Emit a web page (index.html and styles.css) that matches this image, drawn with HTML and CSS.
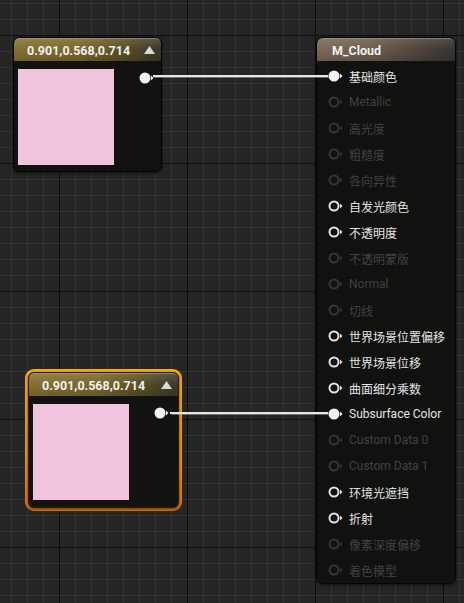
FILE: index.html
```html
<!DOCTYPE html>
<html>
<head>
<meta charset="utf-8">
<link rel="stylesheet" href="styles.css">
</head>
<body>
<div class="graph">

  <div class="node const-node node-a">
    <div class="node-head const-head">
      <span class="head-title">0.901,0.568,0.714</span>
      <svg class="collapse" width="11" height="8" viewBox="0 0 11 8"><polygon points="5.5,0 11,8 0,8" fill="#d8d8d8"/></svg>
    </div>
    <div class="const-body">
      <div class="swatch"></div>
      <svg class="pin" width="16" height="12" viewBox="0 0 16 12"><circle cx="6" cy="6" r="5.5" fill="#f2f2f2"/><polygon points="12,3.5 14.5,6 12,8.5" fill="#f2f2f2"/></svg>
    </div>
  </div>

  <div class="select-ring">
    <div class="node const-node">
      <div class="node-head const-head">
        <span class="head-title">0.901,0.568,0.714</span>
        <svg class="collapse" width="11" height="8" viewBox="0 0 11 8"><polygon points="5.5,0 11,8 0,8" fill="#d8d8d8"/></svg>
      </div>
      <div class="const-body">
        <div class="swatch"></div>
        <svg class="pin" width="16" height="12" viewBox="0 0 16 12"><circle cx="6" cy="6" r="5.5" fill="#f2f2f2"/><polygon points="12,3.5 14.5,6 12,8.5" fill="#f2f2f2"/></svg>
      </div>
    </div>
  </div>

  <div class="node mat-node">
    <div class="node-head mat-head"><span class="head-title">M_Cloud</span></div>
    <ul class="pins">
      <li class="row on"><svg class="pin" width="16" height="12" viewBox="0 0 16 12"><circle cx="6" cy="6" r="5.5" fill="#f2f2f2"/><polygon points="12,3.5 14.5,6 12,8.5" fill="#f2f2f2"/></svg><span>基础颜色</span></li>
      <li class="row off"><svg class="pin" width="16" height="12" viewBox="0 0 16 12"><circle cx="6" cy="6" r="4.5" fill="none" stroke="currentColor" stroke-width="2"/><polygon points="12,3.5 14.5,6 12,8.5" fill="currentColor"/></svg><span>Metallic</span></li>
      <li class="row off"><svg class="pin" width="16" height="12" viewBox="0 0 16 12"><circle cx="6" cy="6" r="4.5" fill="none" stroke="currentColor" stroke-width="2"/><polygon points="12,3.5 14.5,6 12,8.5" fill="currentColor"/></svg><span>高光度</span></li>
      <li class="row off"><svg class="pin" width="16" height="12" viewBox="0 0 16 12"><circle cx="6" cy="6" r="4.5" fill="none" stroke="currentColor" stroke-width="2"/><polygon points="12,3.5 14.5,6 12,8.5" fill="currentColor"/></svg><span>粗糙度</span></li>
      <li class="row off"><svg class="pin" width="16" height="12" viewBox="0 0 16 12"><circle cx="6" cy="6" r="4.5" fill="none" stroke="currentColor" stroke-width="2"/><polygon points="12,3.5 14.5,6 12,8.5" fill="currentColor"/></svg><span>各向异性</span></li>
      <li class="row on"><svg class="pin" width="16" height="12" viewBox="0 0 16 12"><circle cx="6" cy="6" r="4.5" fill="none" stroke="currentColor" stroke-width="2"/><polygon points="12,3.5 14.5,6 12,8.5" fill="currentColor"/></svg><span>自发光颜色</span></li>
      <li class="row on"><svg class="pin" width="16" height="12" viewBox="0 0 16 12"><circle cx="6" cy="6" r="4.5" fill="none" stroke="currentColor" stroke-width="2"/><polygon points="12,3.5 14.5,6 12,8.5" fill="currentColor"/></svg><span>不透明度</span></li>
      <li class="row off"><svg class="pin" width="16" height="12" viewBox="0 0 16 12"><circle cx="6" cy="6" r="4.5" fill="none" stroke="currentColor" stroke-width="2"/><polygon points="12,3.5 14.5,6 12,8.5" fill="currentColor"/></svg><span>不透明蒙版</span></li>
      <li class="row off"><svg class="pin" width="16" height="12" viewBox="0 0 16 12"><circle cx="6" cy="6" r="4.5" fill="none" stroke="currentColor" stroke-width="2"/><polygon points="12,3.5 14.5,6 12,8.5" fill="currentColor"/></svg><span>Normal</span></li>
      <li class="row off"><svg class="pin" width="16" height="12" viewBox="0 0 16 12"><circle cx="6" cy="6" r="4.5" fill="none" stroke="currentColor" stroke-width="2"/><polygon points="12,3.5 14.5,6 12,8.5" fill="currentColor"/></svg><span>切线</span></li>
      <li class="row on"><svg class="pin" width="16" height="12" viewBox="0 0 16 12"><circle cx="6" cy="6" r="4.5" fill="none" stroke="currentColor" stroke-width="2"/><polygon points="12,3.5 14.5,6 12,8.5" fill="currentColor"/></svg><span>世界场景位置偏移</span></li>
      <li class="row on"><svg class="pin" width="16" height="12" viewBox="0 0 16 12"><circle cx="6" cy="6" r="4.5" fill="none" stroke="currentColor" stroke-width="2"/><polygon points="12,3.5 14.5,6 12,8.5" fill="currentColor"/></svg><span>世界场景位移</span></li>
      <li class="row on"><svg class="pin" width="16" height="12" viewBox="0 0 16 12"><circle cx="6" cy="6" r="4.5" fill="none" stroke="currentColor" stroke-width="2"/><polygon points="12,3.5 14.5,6 12,8.5" fill="currentColor"/></svg><span>曲面细分乘数</span></li>
      <li class="row on"><svg class="pin" width="16" height="12" viewBox="0 0 16 12"><circle cx="6" cy="6" r="5.5" fill="#f2f2f2"/><polygon points="12,3.5 14.5,6 12,8.5" fill="#f2f2f2"/></svg><span>Subsurface Color</span></li>
      <li class="row off"><svg class="pin" width="16" height="12" viewBox="0 0 16 12"><circle cx="6" cy="6" r="4.5" fill="none" stroke="currentColor" stroke-width="2"/><polygon points="12,3.5 14.5,6 12,8.5" fill="currentColor"/></svg><span>Custom Data 0</span></li>
      <li class="row off"><svg class="pin" width="16" height="12" viewBox="0 0 16 12"><circle cx="6" cy="6" r="4.5" fill="none" stroke="currentColor" stroke-width="2"/><polygon points="12,3.5 14.5,6 12,8.5" fill="currentColor"/></svg><span>Custom Data 1</span></li>
      <li class="row on"><svg class="pin" width="16" height="12" viewBox="0 0 16 12"><circle cx="6" cy="6" r="4.5" fill="none" stroke="currentColor" stroke-width="2"/><polygon points="12,3.5 14.5,6 12,8.5" fill="currentColor"/></svg><span>环境光遮挡</span></li>
      <li class="row on"><svg class="pin" width="16" height="12" viewBox="0 0 16 12"><circle cx="6" cy="6" r="4.5" fill="none" stroke="currentColor" stroke-width="2"/><polygon points="12,3.5 14.5,6 12,8.5" fill="currentColor"/></svg><span>折射</span></li>
      <li class="row off"><svg class="pin" width="16" height="12" viewBox="0 0 16 12"><circle cx="6" cy="6" r="4.5" fill="none" stroke="currentColor" stroke-width="2"/><polygon points="12,3.5 14.5,6 12,8.5" fill="currentColor"/></svg><span>像素深度偏移</span></li>
      <li class="row off"><svg class="pin" width="16" height="12" viewBox="0 0 16 12"><circle cx="6" cy="6" r="4.5" fill="none" stroke="currentColor" stroke-width="2"/><polygon points="12,3.5 14.5,6 12,8.5" fill="currentColor"/></svg><span>着色模型</span></li>
    </ul>
  </div>

  <div class="wire wire-a"></div>
  <div class="wire wire-b"></div>
</div>
</body>
</html>
```

FILE: styles.css
```css
html, body {
  margin: 0;
  padding: 0;
  background: #252525;
}

body {
  font-family: Roboto, "Noto Sans CJK SC", sans-serif;
  overflow: hidden;
}

.graph {
  position: relative;
  width: 464px;
  height: 603px;
  overflow: hidden;
  background-color: #252525;
  background-image:
    linear-gradient(to right, #0e0e0e 1px, transparent 1px),
    linear-gradient(to bottom, #0e0e0e 1px, transparent 1px),
    linear-gradient(to right, #333333 1px, transparent 1px),
    linear-gradient(to bottom, #333333 1px, transparent 1px);
  background-size: 128px 128px, 128px 128px, 16px 16px, 16px 16px;
  background-position: 59px 35px, 59px 35px, 11px 3px, 11px 3px;
}

.node {
  position: absolute;
  box-sizing: border-box;
  border: 1px solid #050505;
  border-radius: 6px;
  background: rgba(16, 17, 15, 0.93);
  box-shadow: 0 1px 3px rgba(0, 0, 0, 0.6);
  overflow: hidden;
}

.node-head {
  display: flex;
  align-items: center;
  justify-content: space-between;
  box-sizing: border-box;
  height: 23px;
  color: #f0f0f0;
  font-weight: bold;
  font-size: 12.5px;
  border-top: 1px solid rgba(200, 195, 170, 0.55);
  border-radius: 5px 5px 0 0;
}

.head-title {
  white-space: nowrap;
}

.const-node {
  width: 149px;
  height: 135px;
}

.node-a {
  left: 13px;
  top: 37px;
}

.const-head {
  padding: 0 6px 0 13px;
  background:
    linear-gradient(to bottom, rgba(255, 255, 255, 0.12), rgba(255, 255, 255, 0) 45%, rgba(0, 0, 0, 0.15)),
    linear-gradient(to right, #857130 0%, #7a682b 45%, #5a4e24 75%, #3c3a2c 100%);
}

.collapse {
  display: block;
}

.const-body {
  display: flex;
  align-items: flex-start;
  padding: 8px 0 0 4px;
}

.swatch {
  width: 96px;
  height: 96px;
  background: #f0c4dc;
}

.const-body .pin {
  margin: 3px 0 0 24.5px;
}

.pin {
  display: block;
  flex: none;
}

.select-ring {
  position: absolute;
  left: 25px;
  top: 369px;
  width: 157px;
  height: 142px;
  box-sizing: border-box;
  padding: 3px;
  border-radius: 9px;
  background: linear-gradient(to bottom, #f5ad08, #ec8f02 70%, #dc7000);
}

.select-ring .const-node {
  position: relative;
  width: 151px;
  height: 136px;
  border: 1px solid #2a1d06;
  border-radius: 6px;
  background: #121311;
}

.mat-node {
  left: 316px;
  top: 37px;
  width: 140px;
  height: 547px;
  border-radius: 7px;
}

.mat-head {
  padding: 0 0 0 15px;
  background:
    linear-gradient(to bottom, rgba(255, 255, 255, 0.1), rgba(255, 255, 255, 0) 45%, rgba(0, 0, 0, 0.15)),
    linear-gradient(to right, #7c6a58 0%, #6e5e4e 40%, #4d443c 75%, #383532 100%);
}

.pins {
  list-style: none;
  margin: 0;
  padding: 2px 0 0 11px;
}

.row {
  display: flex;
  align-items: center;
  height: 26px;
  font-size: 12px;
  white-space: nowrap;
}

.row .pin {
  margin-right: 5px;
}

.row.on {
  color: #e4e4e4;
}

.row.off {
  color: #414141;
}

.row.off .pin {
  color: #363636;
}

.wire {
  position: absolute;
  height: 2px;
  background: #e6e6e6;
  box-shadow: 0 0 1px 0.5px rgba(170, 170, 170, 0.55);
}

.wire-a {
  left: 153px;
  top: 75px;
  width: 175px;
}

.wire-b {
  left: 170px;
  top: 412px;
  width: 158px;
}
```
